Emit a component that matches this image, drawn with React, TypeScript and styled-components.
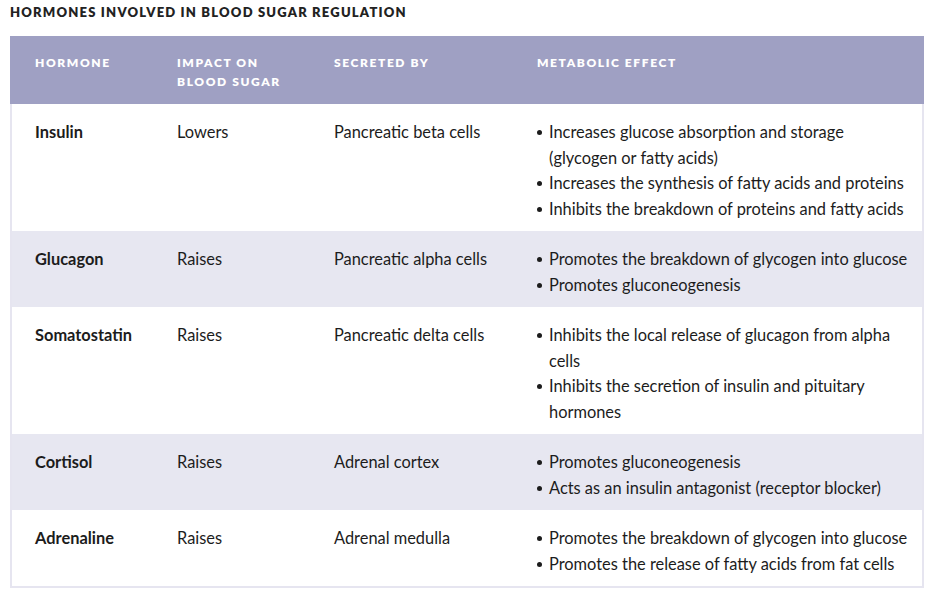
import React from 'react'
import styled, { createGlobalStyle } from 'styled-components'

const GlobalStyle = createGlobalStyle`
  body {
    margin: 0;
    background: #ffffff;
    font-family: Lato, "Noto Sans", sans-serif;
    color: #1c1c1c;
  }
`

const Page = styled.div`
  width: 936px;
  padding: 4px 12px 0 10px;
  box-sizing: border-box;
`

const Title = styled.h1`
  margin: 0 0 16px 0;
  font-size: 13px;
  line-height: 16px;
  font-weight: 800;
  letter-spacing: 1.2px;
  color: #222;
`

const Table = styled.div`
  width: 914px;
  border: 2px solid #e6e5f0;
  border-top: none;
  box-sizing: border-box;
`

const Row = styled.div<{ striped?: boolean }>`
  display: grid;
  grid-template-columns: 142px 157px 203px 1fr;
  padding: 15px 10px 10px 23px;
  background: ${({ striped }) => (striped ? '#e7e7f1' : '#ffffff')};
  font-size: 16.4px;
  line-height: 25.5px;
`

const HeaderRow = styled(Row)`
  background: #9fa0c3;
  margin: 0 -2px;
  padding: 17px 10px 12px 25px;
  min-height: 68px;
  box-sizing: border-box;
  font-size: 12px;
  line-height: 19px;
  font-weight: 800;
  letter-spacing: 1.6px;
  color: #ffffff;
`

const NameCell = styled.div`
  font-weight: 700;
`

const Cell = styled.div``

const Effects = styled.ul`
  margin: 0;
  padding: 0;
  list-style: none;
`

const Effect = styled.li`
  position: relative;
  padding-left: 12px;
  &::before {
    content: '';
    position: absolute;
    left: 0;
    top: 11px;
    width: 5px;
    height: 5px;
    border-radius: 50%;
    background: #1c1c1c;
  }
`

const hormones = [
  {
    name: 'Insulin',
    impact: 'Lowers',
    source: 'Pancreatic beta cells',
    effects: [
      'Increases glucose absorption and storage (glycogen or fatty acids)',
      'Increases the synthesis of fatty acids and proteins',
      'Inhibits the breakdown of proteins and fatty acids',
    ],
  },
  {
    name: 'Glucagon',
    impact: 'Raises',
    source: 'Pancreatic alpha cells',
    effects: ['Promotes the breakdown of glycogen into glucose', 'Promotes gluconeogenesis'],
  },
  {
    name: 'Somatostatin',
    impact: 'Raises',
    source: 'Pancreatic delta cells',
    effects: [
      'Inhibits the local release of glucagon from alpha cells',
      'Inhibits the secretion of insulin and pituitary hormones',
    ],
  },
  {
    name: 'Cortisol',
    impact: 'Raises',
    source: 'Adrenal cortex',
    effects: ['Promotes gluconeogenesis', 'Acts as an insulin antagonist (receptor blocker)'],
  },
  {
    name: 'Adrenaline',
    impact: 'Raises',
    source: 'Adrenal medulla',
    effects: [
      'Promotes the breakdown of glycogen into glucose',
      'Promotes the release of fatty acids from fat cells',
    ],
  },
]

export default function App() {
  return (
    <Page>
      <GlobalStyle />
      <Title>HORMONES INVOLVED IN BLOOD SUGAR REGULATION</Title>
      <Table>
        <HeaderRow>
          <Cell>HORMONE</Cell>
          <Cell>
            IMPACT ON
            <br />
            BLOOD SUGAR
          </Cell>
          <Cell>SECRETED BY</Cell>
          <Cell>METABOLIC EFFECT</Cell>
        </HeaderRow>
        {hormones.map((h, i) => (
          <Row key={h.name} striped={i % 2 === 1}>
            <NameCell>{h.name}</NameCell>
            <Cell>{h.impact}</Cell>
            <Cell>{h.source}</Cell>
            <Effects>
              {h.effects.map(e => (
                <Effect key={e}>{e}</Effect>
              ))}
            </Effects>
          </Row>
        ))}
      </Table>
    </Page>
  )
}
